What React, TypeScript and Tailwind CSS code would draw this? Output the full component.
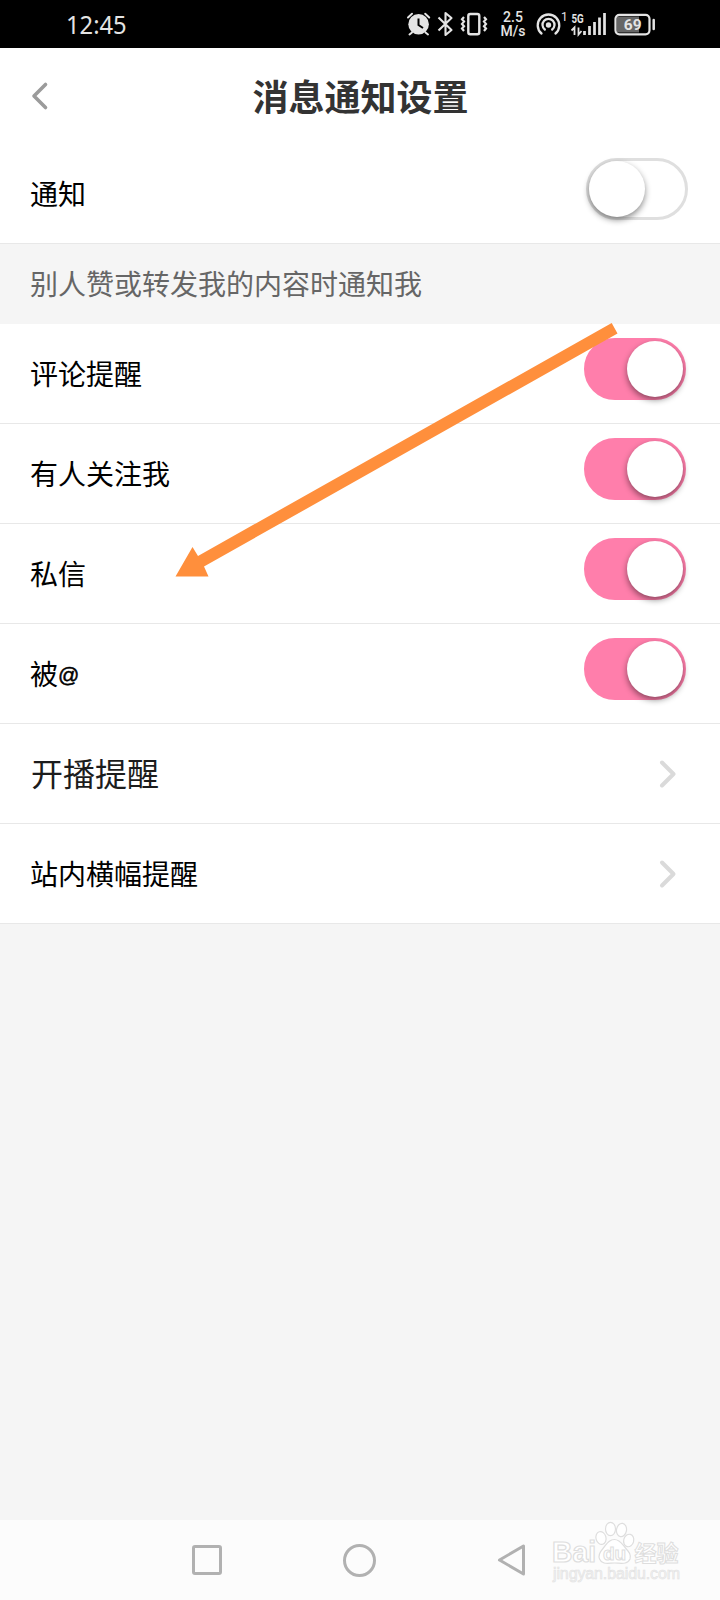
import React, { useState } from 'react'

type SwitchProps = {
  on: boolean
  label: string
  onToggle: () => void
}

function Switch({ on, label, onToggle }: SwitchProps) {
  return (
    <button
      role="switch"
      aria-checked={on}
      aria-label={label}
      onClick={onToggle}
      className={
        on
          ? 'mt-3.5 flex h-[62px] w-[102px] justify-end rounded-full border-[3px] border-[#ff7eab] bg-[#ff7eab]'
          : 'mt-3.5 mr-[-2px] flex h-[62px] w-[102px] justify-start rounded-full border-[3px] border-[#dfdfdf] bg-white'
      }
    >
      <span className="h-14 w-14 rounded-full bg-white shadow-[0_3px_6px_rgba(0,0,0,0.45)]" />
    </button>
  )
}

function StatusBar() {
  return (
    <div className="flex h-12 items-center bg-black text-[#e4e4e4]">
      <div className="w-[340px] pl-[66px] font-['Noto_Sans',sans-serif] text-[25px] leading-none">
        <span className="inline-block origin-left scale-x-[0.95]">12:45</span>
      </div>
      <div className="ml-[64px] flex h-12">
        {/* alarm */}
        <svg width="30" height="48" viewBox="404 0 30 48" fill="none" stroke="currentColor">
          <circle cx="418.6" cy="24.3" r="10.3" fill="currentColor" stroke="none" />
          <path d="M408 17.5l4-3.7M425.200 13.800l4 3.700M412 32.500l-2.500 2M425.500 32.500l2.500 2" strokeWidth="2" strokeLinecap="round" />
          <path d="M418.500 18.500v6.500l4.500 3" stroke="#000" strokeWidth="2" />
        </svg>
        {/* bluetooth */}
        <svg width="24" height="48" viewBox="434 0 24 48" fill="none" stroke="currentColor" strokeWidth="2.100" strokeLinejoin="round">
          <path d="M438.500 17.500l13 12.500-6 5V13l6 5-13 12.500" />
        </svg>
        {/* vibrate */}
        <svg width="34" height="48" viewBox="458 0 34 48" fill="none" stroke="currentColor">
          <rect x="468.300" y="14" width="11" height="20.200" rx="2" strokeWidth="2.400" />
          <path d="M464 17l-2 2.300 2 2.300-2 2.300 2 2.300-2 2.300 2 2.500M484 17l2 2.300-2 2.300 2 2.300-2 2.300 2 2.300-2 2.500" strokeWidth="2.200" />
        </svg>
        <div className="flex w-[42px] flex-col items-center justify-center gap-0.5 font-['Roboto',sans-serif] text-[14px] font-medium leading-[12px]">
          <span className="h-3">2.5</span>
          <span className="h-3">M/s</span>
        </div>
        {/* hotspot */}
        <svg width="36" height="48" viewBox="534 0 36 48" fill="none" stroke="currentColor" strokeWidth="2.300">
          <circle cx="548.500" cy="25" r="2.700" fill="currentColor" stroke="none" />
          <path d="M541.500 33.500a10.800 10.800 0 1 1 14 0M544.800 29.500a6 6 0 1 1 7.400 0" strokeLinecap="round" />
          <text x="561" y="21" fontSize="12" fill="#e4e4e4" stroke="none" fontFamily="Roboto, sans-serif">1</text>
        </svg>
        {/* mobile network */}
        <svg width="40" height="48" viewBox="570 0 40 48" fill="none" stroke="currentColor">
          <text transform="translate(571.500 22.500) scale(0.780 1)" fontSize="12.500" fontWeight="700" fill="currentColor" stroke="none" fontFamily="Roboto, sans-serif">5G</text>
          <path d="M571.500 30.500l3-3v7.500M578.500 27.500v7l3-3.500" strokeWidth="1.800" />
          <path d="M584.500 31v4M589.500 26v9M594.500 22v13M599.500 17.500v17.500M604.500 13v22" strokeWidth="2.700" />
        </svg>
        {/* battery */}
        <svg width="48" height="48" viewBox="610 0 48 48" fill="none" stroke="currentColor">
          <rect x="617" y="16.500" width="22" height="16" fill="#666" stroke="none" />
          <rect x="615.500" y="14.800" width="34" height="19.500" rx="4" strokeWidth="2.200" />
          <path d="M653.700 20v9" strokeWidth="2.500" strokeLinecap="round" />
          <text x="632.700" y="30" textAnchor="middle" fontSize="15.500" fontWeight="700" fill="currentColor" stroke="none" fontFamily="Roboto, sans-serif">69</text>
        </svg>
      </div>
    </div>
  )
}

const rowStyle = 'flex h-[100px] justify-between border-b border-[#e8e8e8] bg-white pl-[30px] pr-[34px]'
const labelStyle = 'self-center pt-[5px] text-[28px] text-black'

function LinkRow({ label, large }: { label: string; large?: boolean }) {
  return (
    <div className={rowStyle}>
      <span className={large ? 'self-center pt-[3px] pl-px text-[32px] text-[#1c1c1c]' : labelStyle}>{label}</span>
      <svg className="mr-2 self-center" width="20" height="32" viewBox="0 0 20 32" fill="none">
        <path d="M4 4.500l11.500 11.500L4 27.500" stroke="#dadada" strokeWidth="4" strokeLinecap="round" strokeLinejoin="round" />
      </svg>
    </div>
  )
}

function Watermark() {
  return (
    <svg className="absolute right-8 bottom-2" width="140" height="76" viewBox="548 1516 140 76" fill="#fff" stroke="#dedede" strokeWidth="1.200">
      <text x="552" y="1562" fontSize="29" fontWeight="700" textLength="44" lengthAdjust="spacingAndGlyphs" fontFamily="Liberation Sans, sans-serif">Bai</text>
      <ellipse cx="601" cy="1538" rx="5" ry="6.500" transform="rotate(-15 601 1538)" />
      <ellipse cx="610.500" cy="1529" rx="5" ry="6.700" />
      <ellipse cx="621.500" cy="1530" rx="5" ry="6.700" transform="rotate(10 621.500 1530)" />
      <ellipse cx="628.700" cy="1540.500" rx="5" ry="6.300" transform="rotate(15 628.700 1540.500)" />
      <path d="M614.500 1539.500c-6 0-8 5-11.500 9-4 4.500-5 7-3.500 10.500 2.500 6 9 4 15 4s13 2 15.500-4c1.500-4-1-7-4.500-11-3.500-4-5.500-8.500-11-8.500z" />
      <text x="614.500" y="1560" textAnchor="middle" fontSize="19" fontWeight="700" strokeWidth="1" fontFamily="Liberation Sans, sans-serif">du</text>
      <text x="634.500" y="1560.500" fontSize="22" fontWeight="700" strokeWidth="1" fontFamily="Noto Sans CJK SC, sans-serif">经验</text>
      <text x="553" y="1579" fontSize="16" textLength="127" strokeWidth="0.600" stroke="#e2e2e2" fill="#f3f3f3" fontFamily="Liberation Sans, sans-serif">jingyan.baidu.com</text>
    </svg>
  )
}

function NavBar() {
  return (
    <div className="relative flex h-20 items-center justify-center gap-[121px] bg-[#fcfcfc]">
      <div className="h-[30px] w-[30px] rounded-[3px] border-[3px] border-[#b1b1b1]" />
      <div className="h-[33px] w-[33px] rounded-full border-[3px] border-[#b1b1b1]" />
      <svg width="32" height="36" viewBox="0 0 32 36" fill="none">
        <path d="M2.500 18L26.500 4v28z" stroke="#b1b1b1" strokeWidth="3" strokeLinejoin="round" />
      </svg>
      <Watermark />
    </div>
  )
}

export default function App() {
  const [notify, setNotify] = useState(false)
  const [reminders, setReminders] = useState([
    { label: '评论提醒', on: true },
    { label: '有人关注我', on: true },
    { label: '私信', on: true },
    { label: '被@', on: true },
  ])

  const toggle = (index: number) => {
    setReminders(reminders.map((item, i) => (i === index ? { ...item, on: !item.on } : item)))
  }

  return (
    <div className="relative flex h-[1600px] w-[720px] flex-col overflow-hidden bg-[#f5f5f5] font-['Liberation_Sans','Noto_Sans_CJK_SC',sans-serif] leading-none">
      <StatusBar />
      <div className="flex h-24 items-center bg-white px-[30px]">
        <button aria-label="返回" className="w-[60px]">
          <svg width="20" height="32" viewBox="0 0 20 32" fill="none">
            <path d="M15.500 4.500L4 16l11.500 11.500" stroke="#9b9b9b" strokeWidth="3.600" strokeLinecap="round" strokeLinejoin="round" />
          </svg>
        </button>
        <h1 className="flex-1 pt-[5px] pl-px text-center text-[36px] font-bold text-[#333]">消息通知设置</h1>
        <div className="w-[60px]" />
      </div>
      <div className={rowStyle}>
        <span className={labelStyle}>通知</span>
        <Switch on={notify} label="通知" onToggle={() => setNotify(!notify)} />
      </div>
      <div className="flex h-20 items-center px-[30px] pt-[3px] text-[28px] text-[#666]">别人赞或转发我的内容时通知我</div>
      {reminders.map((item, i) => (
        <div key={item.label} className={rowStyle}>
          <span className={labelStyle}>
            {item.label.replace('@', '')}
            {item.label.includes('@') && <span className="align-[3px] text-[21px] [-webkit-text-stroke:0.5px_black]">@</span>}
          </span>
          <Switch on={item.on} label={item.label} onToggle={() => toggle(i)} />
        </div>
      ))}
      <LinkRow label="开播提醒" large />
      <LinkRow label="站内横幅提醒" />
      <div className="flex-1" />
      <NavBar />
      {/* arrow pointing at the private message row */}
      <svg className="pointer-events-none absolute left-0 top-0" width="720" height="700" viewBox="0 0 720 700">
        <path d="M611.700 323L617.500 333.500 204 566.500 208.500 576.500H175.500L192.500 547 198 556z" fill="#ff8f3c" />
      </svg>
    </div>
  )
}
